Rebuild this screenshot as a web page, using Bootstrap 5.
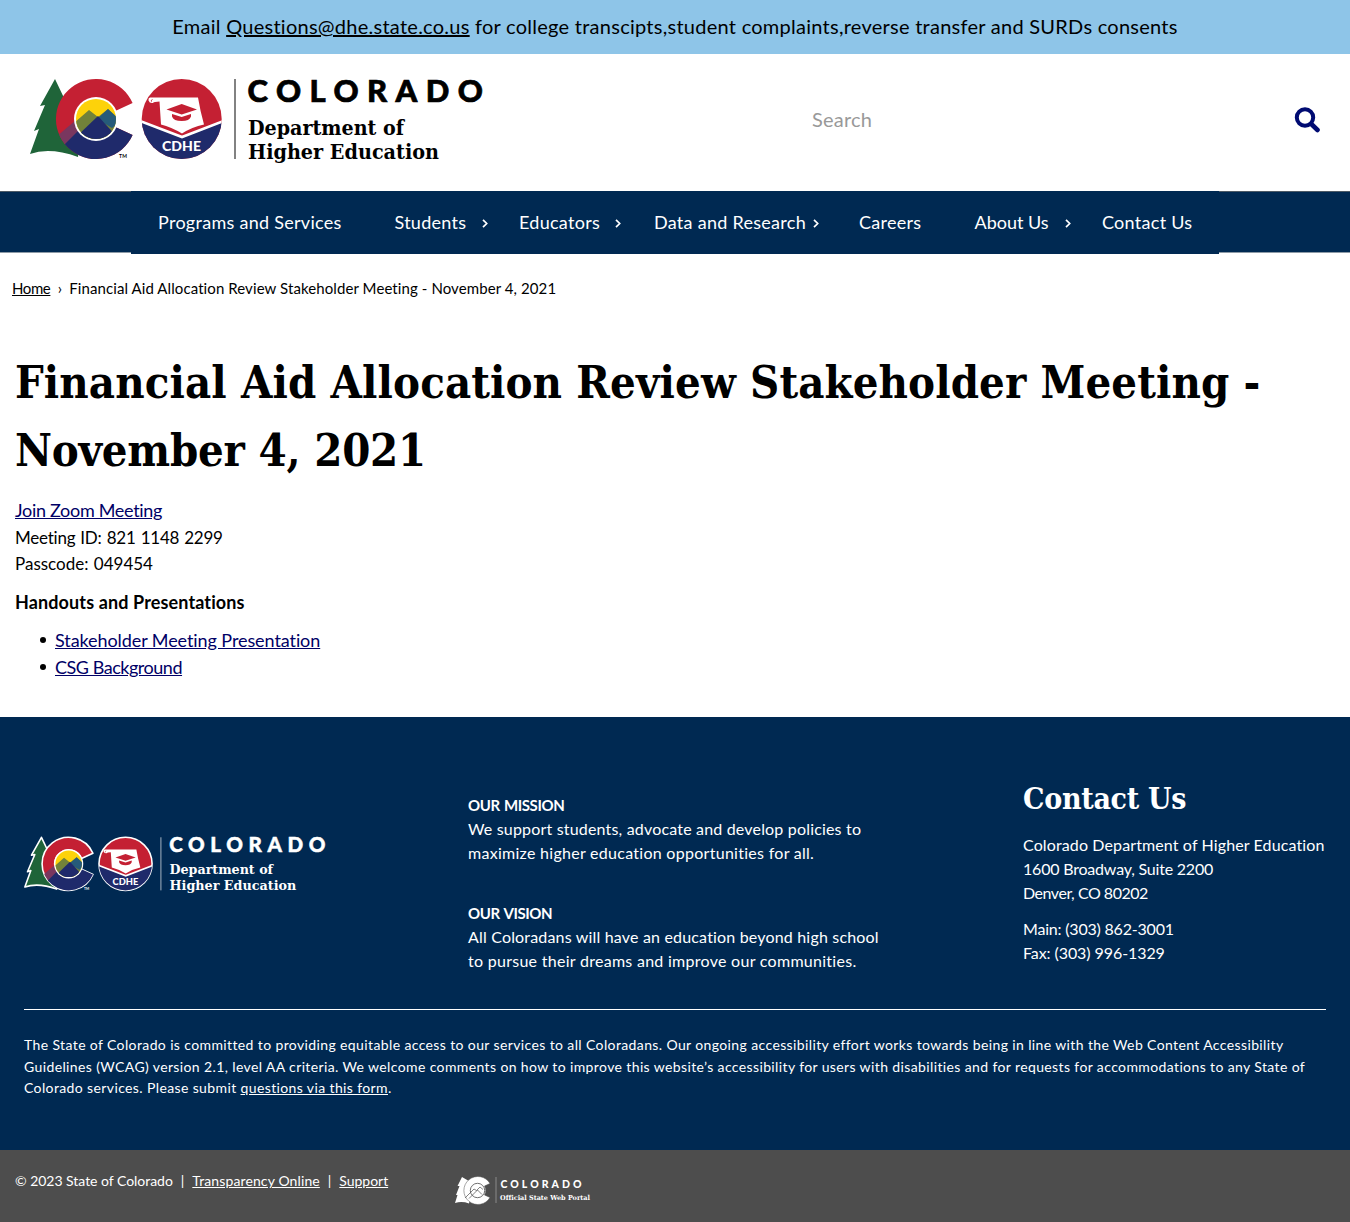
<!DOCTYPE html>
<html lang="en">
<head>
<meta charset="utf-8">
<meta name="viewport" content="width=device-width, initial-scale=1">
<title>Financial Aid Allocation Review Stakeholder Meeting - November 4, 2021</title>
<link href="https://cdn.jsdelivr.net/npm/bootstrap@5.3.0/dist/css/bootstrap.min.css" rel="stylesheet">
<style>
  body { font-family: Lato, "Open Sans", sans-serif; font-size: 18px; line-height: 26.6px; color: #000; background: #fff; font-variant-ligatures: none; }
  .slab { font-family: "DejaVu Serif Condensed", "DejaVu Serif", serif; font-weight: 700; }
  .alert-strip { height: 54px; background: #8ec5e8; font-size: 20px; padding-bottom: 1px; letter-spacing: .26px; }
  .alert-strip a { color: #000; }
  .site-head { height: 137px; padding: 0 30px 0 20px; }
  .head-logo { margin-bottom: 5px; }
  .search-area { width: 508px; margin-bottom: 6px; }
  .search-area input { border: 0; padding: 0 0 2px; font-size: 20px; letter-spacing: .2px; color: #000; box-shadow: none !important; }
  .search-area input::placeholder { color: #999; opacity: 1; }
  .main-nav { height: 62px; background: #002952; border-top: 1px solid #4d5a66; border-bottom: 1px solid #8d9aa6; }
  .main-nav ul { width: 1088px; background: #002952; margin: -1px auto; height: 63px; font-size: 18px; letter-spacing: .28px; }
  .main-nav li { padding: 0 0 1px 27px; position: relative; }
  .main-nav a { color: #fff; text-decoration: none; white-space: nowrap; }
  .main-nav svg { position: absolute; right: 4px; top: 28px; }
  .main-nav li:nth-child(1) { width: 236.5px; } .main-nav li:nth-child(2) { width: 124.5px; }
  .main-nav li:nth-child(3) { width: 135px; } .main-nav li:nth-child(4) { width: 205px; }
  .main-nav li:nth-child(3) svg { right: 6px; } .main-nav li:nth-child(4) svg { right: 13px; }
  .main-nav li:nth-child(5) { width: 115.5px; } .main-nav li:nth-child(6) { width: 127.5px; letter-spacing: 0; }
  .main-nav li:nth-child(7) { width: 144px; }
  .crumbs { padding: 22px 12px 0; font-size: 15px; height: 96px; letter-spacing: .09px; }
  .crumbs a { color: #000; letter-spacing: -.4px; }
  .crumbs i { font-style: normal; margin: 0 7.3px; }
  main { padding: 0 15px; height: 368px; }
  main h1 { font-size: 45px; line-height: 67.5px; margin: 0 0 13px; letter-spacing: .1px; }
  main h1 span { letter-spacing: -.23px; }
  main p { margin-bottom: 11.8px; }
  main a { color: #000066; }
  main ul { padding-left: 40px; list-style: none; }
  main li { position: relative; }
  main li::before { content: ""; position: absolute; left: -15px; top: 10.5px; width: 6px; height: 6px; border-radius: 50%; background: #000; }
  .t1 { letter-spacing: -.3px; } .t3 { letter-spacing: -.47px; }
  .t2 { font-size: 17px; line-height: 1; letter-spacing: -.24px; word-spacing: 1px; }
  .t10 { font-size: 17px; line-height: 1; letter-spacing: 0; word-spacing: 1px; }
  .t4 { letter-spacing: .12px; } .t5 { letter-spacing: -.08px; }
  .t6 { font-size: 15px; line-height: 1; letter-spacing: -.4px; word-spacing: 1px; }
  .t7 { letter-spacing: .18px; } .t8 { letter-spacing: .28px; } .t9 { letter-spacing: -.2px; }
  .main-foot { background: #002952; color: #fff; height: 433px; padding: 66px 24px 0; font-size: 16px; line-height: 24px; }
  .foot-cols { height: 226px; }
  .foot-logo { width: 444px; padding-top: 45px; --edge: #fff; }
  .foot-logo svg { margin-left: -5.6px; }
  .edge { stroke: var(--edge, none); stroke-width: 2.4px; stroke-linejoin: round; }
  .foot-mid { width: 555px; padding-top: 10px; }
  .foot-mid p { margin-bottom: 36px; }
  .foot-contact { margin-top: -1px; }
  .foot-contact h2 { font-size: 30px; line-height: 34px; margin: 0 0 17px; letter-spacing: -.3px; }
  .foot-contact p { margin-bottom: 12px; white-space: nowrap; }
  .access-note { border-top: 1px solid #fff; padding-top: 24px; font-size: 14px; line-height: 21.5px; letter-spacing: .38px; white-space: nowrap; }
  .access-note a, .base-foot a { color: #fff; }
  .base-foot { height: 72px; background: #4d4d4d; color: #fff; font-size: 14px; line-height: 22px; padding: 20px 15px 0; }
  .legal-links { width: 439px; letter-spacing: -.03px; }
  .legal-links i { font-style: normal; margin: 0 8px; }
</style>
</head>
<body>
<svg width="0" height="0" class="position-absolute" aria-hidden="true">
  <defs>
    <clipPath id="c-clip"><path d="M112.6 38A40 40 0 1 0 112.6 70L95.3 62A21 21 0 1 1 95.3 46Z"/></clipPath>
    <clipPath id="sun-clip"><circle cx="76" cy="54" r="20"/></clipPath>
    <clipPath id="seal-clip"><circle cx="161.7" cy="54" r="40"/></clipPath>
    <symbol id="cdhe" viewBox="0 0 480 110">
      <path class="edge" d="M35 14L20 41L25 40L14 66L19 64L10 89Q30 82 58 92L65 40L45 35Z" fill="#1f6439"/>
      <path class="edge" d="M112.6 38A40 40 0 1 0 112.6 70L95.3 62A21 21 0 1 1 95.3 46Z" fill="#c42033"/>
      <g clip-path="url(#c-clip)">
        <path d="M36 72L56 55L64 62L44 84Z" fill="#79375f"/>
        <path d="M41 83L64 60H120V100H41Z" fill="#1f2a6b"/>
      </g>
      <circle cx="76" cy="54" r="22" fill="#fff"/>
      <g clip-path="url(#sun-clip)">
        <path d="M50 30H100V80H50Z" fill="#fdd20a"/>
        <path d="M54 58L69 45L78 52L88 44L100 55V80H54Z" fill="#72823a"/>
        <path d="M77 54L88 44L101 56L92 63Z" fill="#265b7a"/>
        <path d="M55 73L78 51L100 75V80H55Z" fill="#1f2a6b"/>
      </g>
      <circle class="edge" cx="161.7" cy="54" r="40" fill="#c42033"/>
      <g clip-path="url(#seal-clip)">
        <path d="M118 56L162 72L206 56V100H118Z" fill="#1f2a6b"/>
        <path d="M119 55.5L162 72L205 55.5" fill="none" stroke="#fff" stroke-width="2.6"/>
      </g>
      <path d="M130 32.5H178Q180 45 184 59.5Q172 62 162 68.5Q151 62 141 59.5L139.5 36.5Q134 36.500 133 38Q129.500 38.500 128.500 35.500Q128 33 130 32.5Z" fill="#fff"/>
      <path d="M132.500 34.5Q130.7 35 131.500 36.6" fill="none" stroke="#c42033" stroke-width=".9"/>
      <path d="M161.7 39L177 44.5L161.7 49.5L146.5 44.5ZM152 49L161.7 52L171 49V51.5Q169.5 56 161.7 56Q153.5 56 152 51.5Z" fill="#c42033"/>
      <text x="142" y="86" font-family="Lato" font-weight="900" font-size="14" textLength="39" fill="#fff">CDHE</text>
      <text x="99" y="93" font-family="Lato" font-weight="700" font-size="5" textLength="8" fill="currentColor">TM</text>
      <path d="M215 14V94" stroke="currentColor" stroke-width="1.5" opacity=".65"/>
      <text x="227.5" y="36.6" font-family="Lato" font-weight="900" font-size="31" textLength="235.5" fill="currentColor" stroke="currentColor" stroke-width=".7">COLORADO</text>
      <g font-family="DejaVu Serif" font-weight="700" font-size="20" fill="currentColor">
        <text x="228" y="70" textLength="156" lengthAdjust="spacingAndGlyphs">Department of</text>
        <text x="228" y="93.5" textLength="191" lengthAdjust="spacingAndGlyphs">Higher Education</text>
      </g>
    </symbol>
    <symbol id="chev" viewBox="0 0 6 9"><path d="M1 .8L4.7 4.5L1 8.2" fill="none" stroke="#fff" stroke-width="1.7"/></symbol>
  </defs>
</svg>

<div class="alert-strip d-flex justify-content-center align-items-center"><div>Email <a href="#">Questions@dhe.state.co.us</a> for college transcipts,student complaints,reverse transfer and SURDs consents</div></div>

<header class="site-head d-flex justify-content-between align-items-center">
  <a href="#" class="text-black" aria-label="Colorado Department of Higher Education"><svg class="d-block head-logo" width="480" height="110"><use href="#cdhe"/></svg></a>
  <form class="search-area d-flex align-items-center">
    <input class="form-control bg-transparent" type="text" placeholder="Search" aria-label="Search">
    <svg width="26" height="26" viewBox="0 0 26 26" class="flex-shrink-0"><circle cx="11" cy="10.5" r="8.2" fill="none" stroke="#000b72" stroke-width="4"/><path d="M17.3 17L23.5 23" stroke="#000b72" stroke-width="4.6" stroke-linecap="round"/></svg>
  </form>
</header>

<nav class="main-nav">
  <ul class="list-unstyled d-flex align-items-center">
    <li><a href="#">Programs and Services</a></li>
    <li class="h-100 d-flex align-items-center"><a href="#">Students</a><svg width="6" height="9"><use href="#chev"/></svg></li>
    <li class="h-100 d-flex align-items-center"><a href="#">Educators</a><svg width="6" height="9"><use href="#chev"/></svg></li>
    <li class="h-100 d-flex align-items-center"><a href="#">Data and Research</a><svg width="6" height="9"><use href="#chev"/></svg></li>
    <li><a href="#">Careers</a></li>
    <li class="h-100 d-flex align-items-center"><a href="#">About Us</a><svg width="6" height="9"><use href="#chev"/></svg></li>
    <li><a href="#">Contact Us</a></li>
  </ul>
</nav>

<div class="crumbs"><a href="#">Home</a><i>›</i><span>Financial Aid Allocation Review Stakeholder Meeting - November 4, 2021</span></div>

<main>
  <h1 class="slab">Financial Aid Allocation Review Stakeholder Meeting -<br><span>November 4, 2021</span></h1>
  <p><a href="#" class="t1">Join Zoom Meeting</a><br><span class="t2">Meeting ID: 821 1148 2299</span><br><span class="t10">Passcode: 049454</span></p>
  <p class="fw-bold t4">Handouts and Presentations</p>
  <ul class="mb-0">
    <li><a href="#" class="t5">Stakeholder Meeting Presentation</a></li>
    <li><a href="#" class="t3">CSG Background</a></li>
  </ul>
</main>

<footer>
  <div class="main-foot">
    <div class="foot-cols d-flex">
      <div class="foot-logo"><svg width="319" height="73"><use href="#cdhe"/></svg></div>
      <div class="foot-mid">
        <p><b class="t6">OUR MISSION</b><br><span class="t7">We support students, advocate and develop policies to</span><br><span class="t8">maximize higher education opportunities for all.</span></p>
        <p><b class="t6">OUR VISION</b><br><span class="t7">All Coloradans will have an education beyond high school</span><br><span class="t8">to pursue their dreams and improve our communities.</span></p>
      </div>
      <div class="foot-contact">
        <h2 class="slab">Contact Us</h2>
        <p><span class="t4">Colorado Department of Higher Education</span><br><span class="t9">1600 Broadway, Suite 2200</span><br><span class="t3">Denver, CO 80202</span></p>
        <p><span class="t9">Main: (303) 862-3001</span><br><span class="t5">Fax: (303) 996-1329</span></p>
      </div>
    </div>
    <div class="access-note">The State of Colorado is committed to providing equitable access to our services to all Coloradans. Our ongoing accessibility effort works towards being in line with the Web Content Accessibility<br>Guidelines (WCAG) version 2.1, level AA criteria. We welcome comments on how to improve this website’s accessibility for users with disabilities and for requests for accommodations to any State of<br>Colorado services. Please submit <a href="#">questions via this form</a>.</div>
  </div>
  <div class="base-foot d-flex">
    <div class="legal-links">© 2023 State of Colorado<i>|</i><a href="#" class="t4">Transparency Online</a><i>|</i><a href="#">Support</a></div>
    <svg width="140" height="32" viewBox="0 0 140 32" class="mt-1">
      <path d="M8 3L3.5 12H5.5L2 21H3.5L1 29Q8 27 15 29.5L20 10Z" fill="#fff"/>
      <path d="M36 9.5A14 14 0 1 0 36 23.5L30.5 21A9 9 0 0 0 30.5 12Z" fill="#fff" stroke="#4d4d4d" stroke-width=".5"/>
      <circle cx="23.5" cy="16.5" r="7.2" fill="#fff" stroke="#4d4d4d" stroke-width=".8"/>
      <path d="M11 24L20 15L22.5 16.5L26 13L29 15.5M15 24.5L23.5 16L28 20.5" fill="none" stroke="#4d4d4d" stroke-width=".7"/>
      <path d="M42 3V29" stroke="#999" stroke-width=".8"/>
      <text x="46.5" y="13.8" font-family="Lato" font-weight="900" font-size="10.5" textLength="81" fill="#fff">COLORADO</text>
      <text x="46" y="26" font-family="DejaVu Serif" font-weight="700" font-size="6.8" textLength="90" lengthAdjust="spacingAndGlyphs" fill="#fff">Official State Web Portal</text>
    </svg>
  </div>
</footer>
<script src="https://cdn.jsdelivr.net/npm/bootstrap@5.3.0/dist/js/bootstrap.bundle.min.js"></script>
</body>
</html>
